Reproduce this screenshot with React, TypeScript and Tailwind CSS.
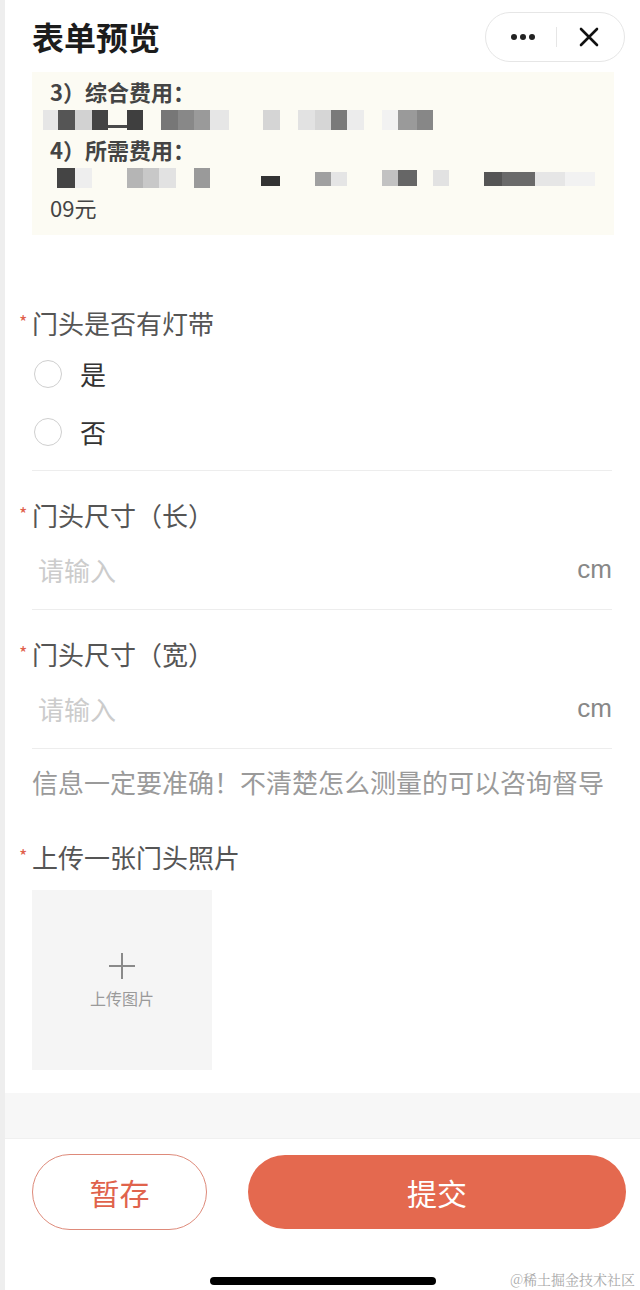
import React from 'react';

const FONT = '"Noto Sans CJK SC", "Noto Sans", sans-serif';

type Block = [number, number, string, number?, number?];

// mosaic blocks of the blurred values: [x, width, colour, y, height]
const ROW_ONE: Block[] = [
    [11, 15, '#e6e6e6'], [26, 17, '#555555'], [43, 17, '#d2d2d2'], [60, 16, '#444444'],
    [76, 19, '#4a4a4a', 19, 3], [95, 16, '#3f3f3f'], [129, 17, '#777777'], [146, 16, '#888888'],
    [162, 16, '#9a9a9a'], [178, 19, '#e6e6e6'], [231, 17, '#d5d5d5'], [266, 17, '#e2e2e2'],
    [283, 16, '#d6d6d6'], [299, 16, '#7a7a7a'], [315, 17, '#ececec'], [350, 16, '#f2f2f2'],
    [366, 19, '#9a9a9a'], [385, 16, '#878787'],
];

const ROW_TWO: Block[] = [
    [25, 18, '#444444'], [43, 17, '#eeeeee'], [95, 16, '#b5b5b5'], [111, 16, '#c8c8c8'],
    [127, 17, '#e2e2e2'], [162, 16, '#9a9a9a'], [229, 19, '#333333', 12, 10], [283, 16, '#a0a0a0', 8, 14],
    [299, 16, '#e5e5e5', 8, 14], [350, 16, '#c2c2c2', 6, 16], [366, 19, '#666666', 6, 16], [401, 16, '#e2e2e2', 6, 16],
    [452, 18, '#555555', 8, 14], [470, 33, '#6a6a6a', 8, 14], [503, 30, '#e6e6e6', 8, 14], [533, 30, '#f2f2f2', 8, 14],
];

const Mosaic = ({ blocks }: { blocks: Block[] }) => (
    <svg width="582" height="29" viewBox="0 0 582 29" className="block">
        {blocks.map(([x, w, c, y = 4, h = 20], i) => (
            <rect key={i} x={x} y={y} width={w} height={h} fill={c} />
        ))}
    </svg>
);

const Label = ({ children }: { children: React.ReactNode }) => (
    <div className="flex items-start -ml-[13px] h-[36px]">
        <span className="w-[13px] text-[18px] leading-[18px] text-[#e0604b] pt-[7px]">*</span>
        <span className="text-[26px] leading-[36px] text-[#555555]">{children}</span>
    </div>
);

const Radio = ({ text }: { text: string }) => (
    <div className="flex items-center h-[58px] pl-[2px]">
        <span className="w-[28px] h-[28px] rounded-full border-[1.5px] border-[#cfcfcf]" />
        <span className="ml-[18px] text-[26px] leading-none text-[#333333]">{text}</span>
    </div>
);

const NumberInput = () => (
    <div className="flex items-center justify-between h-[72px] pl-[6px]">
        <span className="text-[26px] text-[#cccccc]">请输入</span>
        <span className="text-[26px] text-[#888888]" style={{ fontFamily: '"Liberation Sans", sans-serif' }}>cm</span>
    </div>
);

const Divider = () => <div className="h-px bg-[#ededed]" />;

export default function App() {
    return (
        <div className="relative flex w-[640px] h-[1290px] bg-white overflow-hidden" style={{ fontFamily: FONT }}>
            <div className="w-[5px] shrink-0 bg-[#eeeeee]" />
            <div className="flex-1 min-w-0 flex flex-col overflow-hidden">
                {/* header */}
                <div className="h-[70px] flex items-start justify-between pl-[27px] pr-[15px]">
                    <div className="mt-[14px] text-[32px] leading-[44px] font-bold text-[#1c1c1c]">表单预览</div>
                    <div className="mt-[12px] w-[140px] h-[50px] rounded-full border border-[#e6e6e6] flex items-center">
                        <div className="w-[70px] flex justify-center pl-[3px] gap-[3px]">
                            <span className="w-[6px] h-[6px] rounded-full bg-[#222]" />
                            <span className="w-[6px] h-[6px] rounded-full bg-[#222]" />
                            <span className="w-[6px] h-[6px] rounded-full bg-[#222]" />
                        </div>
                        <div className="w-px h-[20px] bg-[#e6e6e6]" />
                        <div className="flex-1 flex justify-center pr-[3px]">
                            <svg width="20" height="20" viewBox="0 0 20 20">
                                <path d="M2 2 L18 18 M18 2 L2 18" stroke="#111" strokeWidth="2.6" strokeLinecap="round" />
                            </svg>
                        </div>
                    </div>
                </div>

                {/* notice */}
                <div className="ml-[27px] mr-[26px] mt-[2px] h-[163px] bg-[#fcfbf3] pt-[5px] text-[22px] leading-[29px] text-[#444444]">
                    <div className="pl-[18px] font-bold">3）综合费用：</div>
                    <Mosaic blocks={ROW_ONE} />
                    <div className="pl-[18px] font-bold">4）所需费用：</div>
                    <Mosaic blocks={ROW_TWO} />
                    <div className="pl-[18px]">09元</div>
                </div>

                {/* form */}
                <div className="pl-[27px] pr-[28px]">
                    <div className="mt-[70px]">
                        <Label>门头是否有灯带</Label>
                        <div className="mt-[4px] pb-[9px]">
                            <Radio text="是" />
                            <Radio text="否" />
                        </div>
                        <Divider />
                    </div>
                    <div className="mt-[26px]">
                        <Label>门头尺寸（长）</Label>
                        <NumberInput />
                        <div className="h-[4px]" />
                        <Divider />
                    </div>
                    <div className="mt-[26px]">
                        <Label>门头尺寸（宽）</Label>
                        <NumberInput />
                        <div className="h-[4px]" />
                        <Divider />
                    </div>
                    <div className="mt-[15px] text-[26px] leading-[36px] text-[#9a9a9a] whitespace-nowrap">
                        信息一定要准确！不清楚怎么测量的可以咨询督导
                    </div>
                    <div className="mt-[39px]">
                        <Label>上传一张门头照片</Label>
                        <div className="mt-[15px] w-[180px] h-[180px] bg-[#f5f5f5] flex flex-col items-center justify-center">
                            <svg width="28" height="28" viewBox="0 0 28 28">
                                <path d="M14 1 V27 M1 14 H27" stroke="#8a8a8a" strokeWidth="2" />
                            </svg>
                            <span className="mt-[7px] text-[16px] leading-[22px] text-[#9a9a9a]">上传图片</span>
                        </div>
                    </div>
                </div>

                <div className="mt-[23px] h-[45px] bg-[#f7f7f7]" />

                {/* bottom bar */}
                <div className="flex-1 flex flex-col border-t border-[#f0f0f0]">
                    <div className="mt-[15px] flex items-center pl-[27px] pr-[14px] gap-[41px]">
                        <button className="w-[175px] shrink-0 h-[76px] rounded-full border-[1.5px] border-[#de8a7a] text-[30px] text-[#e0634c]">
                            暂存
                        </button>
                        <button className="flex-1 h-[74px] rounded-full bg-[#e4694f] text-[30px] text-white">
                            提交
                        </button>
                    </div>
                    <div className="mt-auto mb-[5px] mx-auto w-[226px] h-[8px] rounded-full bg-black" />
                </div>
            </div>
            <span
                className="absolute right-[5px] bottom-[1px] text-[14px] leading-[20px] text-[#a8a8a8]"
                style={{ fontFamily: '"Noto Serif CJK SC", "Noto Sans CJK SC", serif' }}
            >
                @稀土掘金技术社区
            </span>
        </div>
    );
}
